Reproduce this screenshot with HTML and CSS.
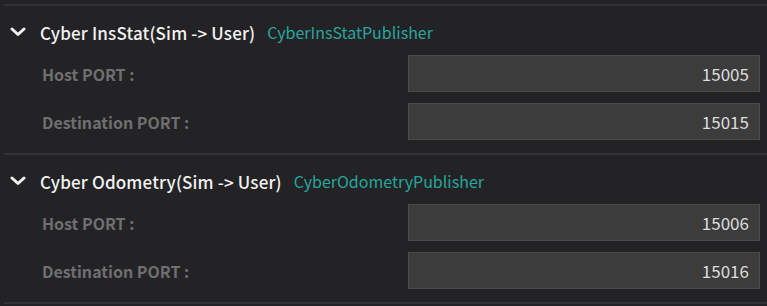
FILE: index.html
```html
<!DOCTYPE html>
<html>
  <head>
    <title>Cyber Publishers</title>
    <link rel="stylesheet" href="styles.css">
  </head>

  <body>
    <div class="panel">
      <div class="section">
        <div class="section-header">
          <svg class="chevron" viewBox="0 0 16 10" width="16" height="10">
            <path d="M2 2 L8 7.5 L14 2" />
          </svg>
          <span class="section-title">Cyber InsStat(Sim -&gt; User)</span>
          <span class="section-type">CyberInsStatPublisher</span>
        </div>
        <div class="field">
          <div class="field-label">Host PORT :</div>
          <div class="field-input">15005</div>
        </div>
        <div class="field">
          <div class="field-label">Destination PORT :</div>
          <div class="field-input">15015</div>
        </div>
      </div>

      <div class="section">
        <div class="section-header">
          <svg class="chevron" viewBox="0 0 16 10" width="16" height="10">
            <path d="M2 2 L8 7.5 L14 2" />
          </svg>
          <span class="section-title">Cyber Odometry(Sim -&gt; User)</span>
          <span class="section-type">CyberOdometryPublisher</span>
        </div>
        <div class="field">
          <div class="field-label">Host PORT :</div>
          <div class="field-input">15006</div>
        </div>
        <div class="field">
          <div class="field-label">Destination PORT :</div>
          <div class="field-input">15016</div>
        </div>
      </div>
    </div>
  </body>
</html>
```

FILE: styles.css
```css
* {
  box-sizing: border-box;
  margin: 0;
  padding: 0;
}

body {
  background: #232325;
  font-family: "Noto Sans CJK SC", "Noto Sans", sans-serif;
  width: 767px;
  height: 306px;
  overflow: hidden;
}

.panel {
  padding: 4px 0 0 4px;
}

.section {
  border-top: 2px solid #333335;
  padding: 8px 7px 13px 0;
}

.section:last-child {
  border-bottom: 2px solid #333335;
}

.section-header {
  display: flex;
  align-items: center;
  height: 36px;
  margin-bottom: 5px;
  padding-left: 6px;
}

.chevron {
  fill: none;
  stroke: #f2f2f2;
  stroke-width: 3;
  stroke-linecap: round;
  stroke-linejoin: round;
  margin-right: 14px;
}

.section-title {
  font-size: 17px;
  font-weight: 500;
  letter-spacing: 0.15px;
  color: #f2f2f2;
  margin-right: 12px;
}

.section-type {
  font-size: 16px;
  color: #26a69e;
}

.field {
  display: flex;
  align-items: center;
  justify-content: space-between;
  padding-left: 38px;
}

.field + .field {
  margin-top: 11px;
}

.field-label {
  font-size: 16px;
  font-weight: 700;
  color: #6f6f6f;
}

.field-input {
  width: 352px;
  height: 37px;
  background: #3c3c3c;
  border: 1px solid #4b4b4b;
  color: #dcdcdc;
  font-size: 17px;
  text-align: right;
  line-height: 35px;
  padding-right: 10px;
}
```
